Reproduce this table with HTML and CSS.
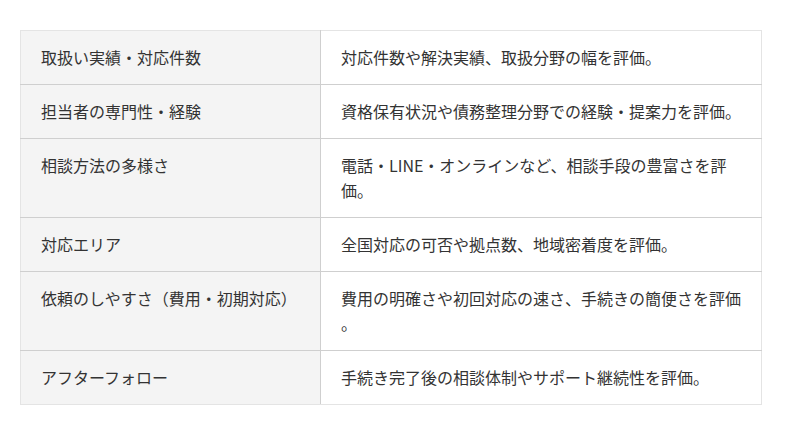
FILE: index.html
```html
<!DOCTYPE html>
<html lang="ja">
<head>
<meta charset="utf-8">
<link rel="stylesheet" href="styles.css">
</head>
<body>
<div class="wrap">
<table class="criteria">
<tbody>
<tr><th>取扱い実績・対応件数</th><td>対応件数や解決実績、取扱分野の幅を評価。</td></tr>
<tr><th>担当者の専門性・経験</th><td>資格保有状況や債務整理分野での経験・提案力を評価。</td></tr>
<tr><th>相談方法の多様さ</th><td>電話・LINE・オンラインなど、相談手段の豊富さを評価。</td></tr>
<tr><th>対応エリア</th><td>全国対応の可否や拠点数、地域密着度を評価。</td></tr>
<tr><th>依頼のしやすさ（費用・初期対応）</th><td>費用の明確さや初回対応の速さ、手続きの簡便さを評価。</td></tr>
<tr><th>アフターフォロー</th><td>手続き完了後の相談体制やサポート継続性を評価。</td></tr>
</tbody>
</table>
</div>
</body>
</html>
```
FILE: styles.css
```css
html, body {
  margin: 0;
  padding: 0;
  background: #fff;
}
body {
  font-family: "Noto Sans CJK JP", "Noto Sans", sans-serif;
  color: #333;
  font-size: 16px;
}
.wrap {
  padding: 30px 0 0 20px;
}
.criteria {
  width: 742px;
  border-collapse: collapse;
  table-layout: fixed;
  border: 1px solid #e4e4e4;
}
.criteria th,
.criteria td {
  font-weight: normal;
  text-align: left;
  vertical-align: top;
  line-height: 25px;
  padding: 14px 20px;
  border-bottom: 1px solid #cfcfcf;
}
.criteria th {
  width: 259px;
  background: #f4f4f4;
  border-right: 1px solid #cfcfcf;
}
.criteria td {
  line-break: anywhere;
}
.criteria tr:last-child th,
.criteria tr:last-child td {
  border-bottom: 1px solid #e4e4e4;
}
```
